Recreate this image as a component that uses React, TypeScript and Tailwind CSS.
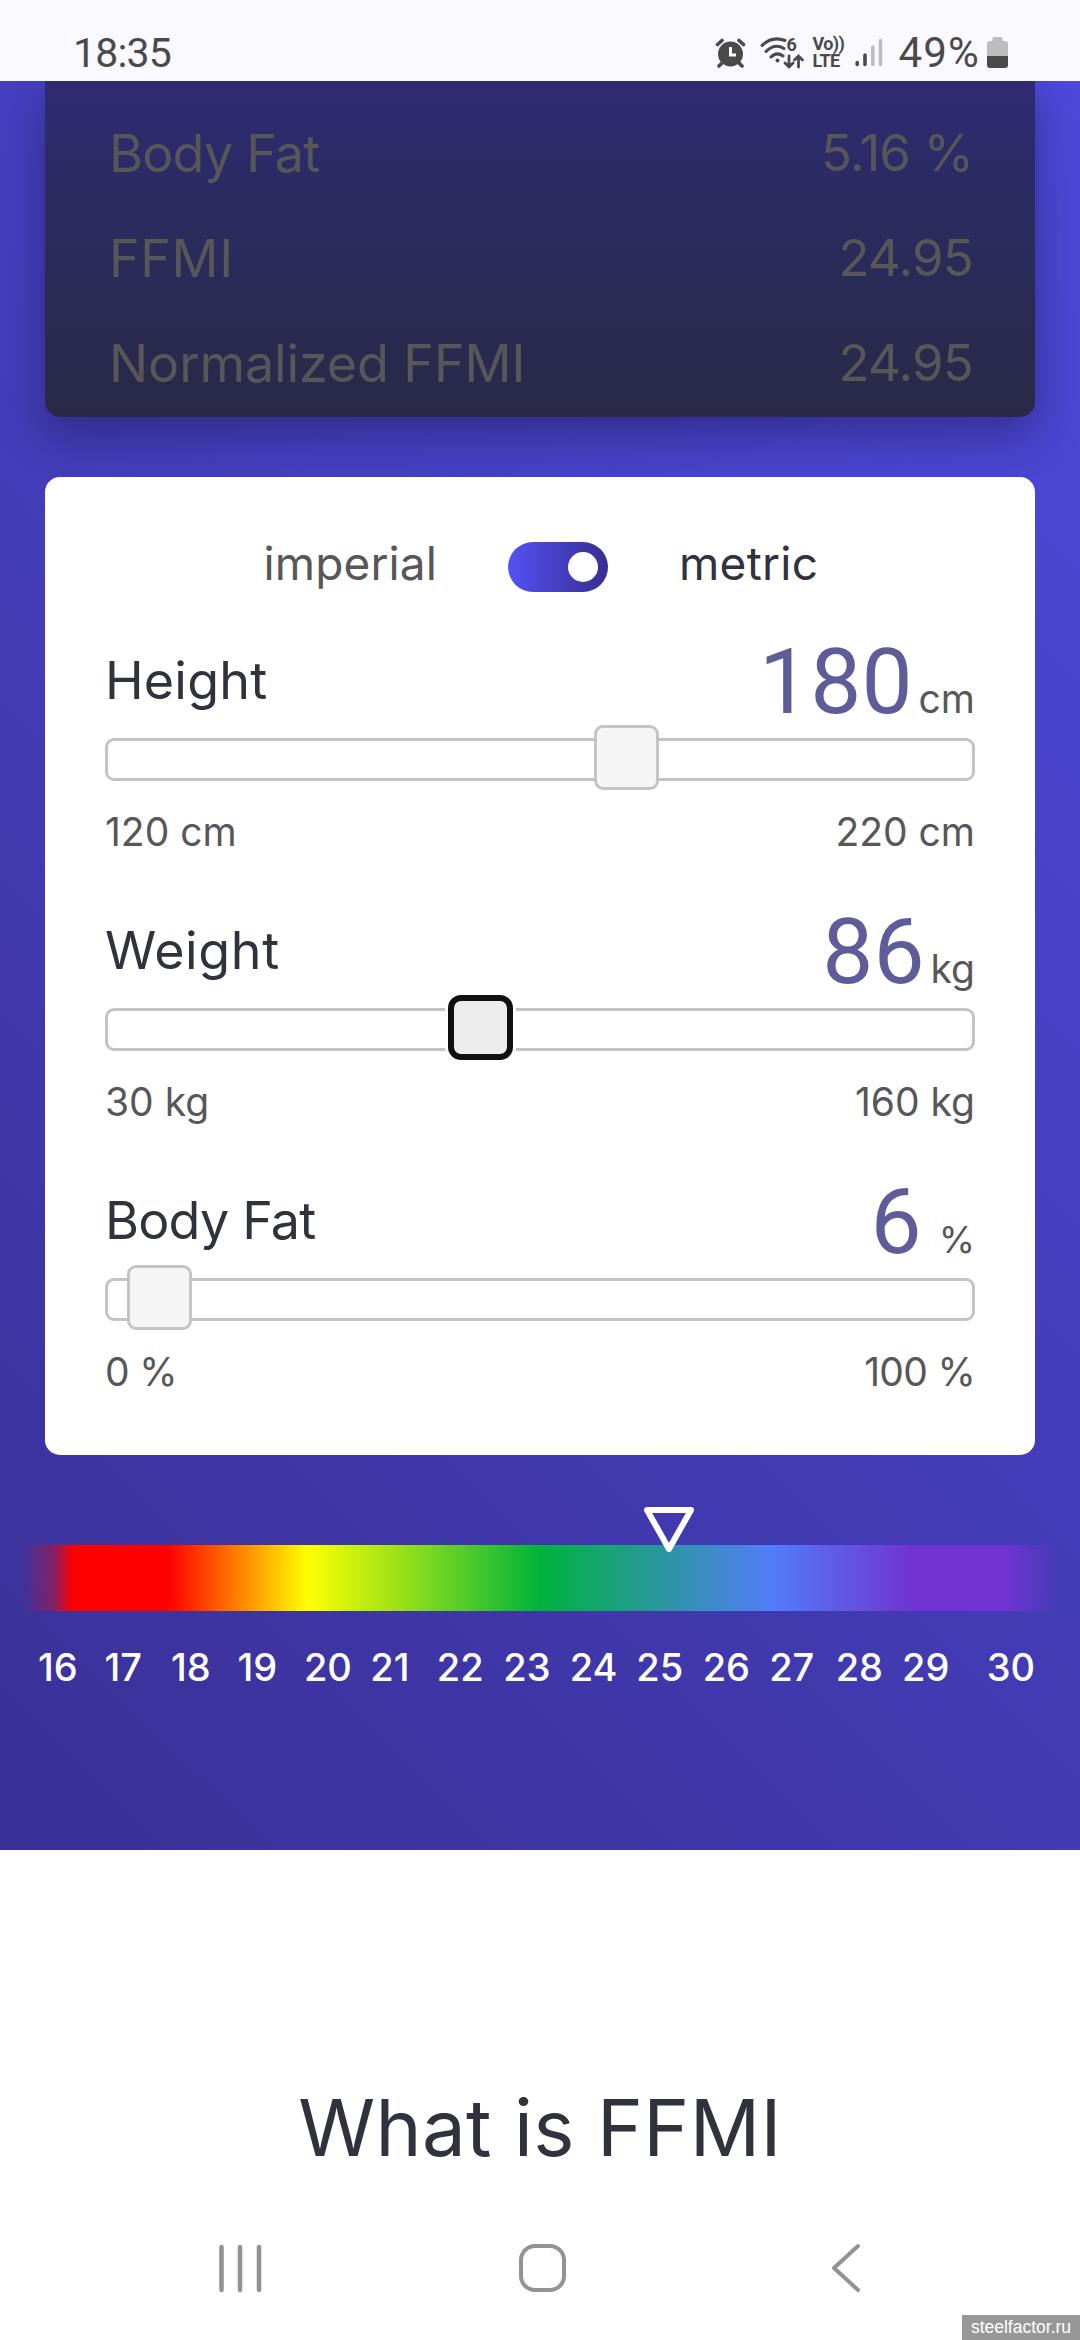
import { useState } from 'react';
import clsx from 'clsx';

type Result = { label: string; value: string; tracking: string };

type Field = {
  label: string;
  unit: string;
  value: number;
  min: number;
  max: number;
  thumb: number;
  tracking: string;
  focused?: boolean;
};

const RESULTS: Result[] = [
  { label: 'Body Fat', value: '5.16 %', tracking: 'tracking-[-0.8px]' },
  { label: 'FFMI', value: '24.95', tracking: 'tracking-[0.6px]' },
  { label: 'Normalized FFMI', value: '24.95', tracking: 'tracking-[-0.1px]' },
];

// thumb: left offset of the handle along the track
const FIELDS: Field[] = [
  { label: 'Height', unit: 'cm', value: 180, min: 120, max: 220, thumb: 486, tracking: 'tracking-[0.2px]' },
  { label: 'Weight', unit: 'kg', value: 86, min: 30, max: 160, thumb: 340, tracking: 'tracking-[0.6px]', focused: true },
  { label: 'Body Fat', unit: '%', value: 6, min: 0, max: 100, thumb: 19, tracking: 'tracking-[-0.8px]' },
];

const SCALE = [16, 17, 18, 19, 20, 21, 22, 23, 24, 25, 26, 27, 28, 29, 30];

function StatusBar() {
  return (
    <header className="flex h-[81px] shrink-0 items-start justify-between bg-[#faf9ff] pt-[29px] pr-[72px] pl-[73px] font-[Roboto,sans-serif] text-[#4a4a4a]">
      <span className="text-[41px] leading-[48px] tracking-[-0.8px]">18:35</span>
      <div className="flex items-start">
        <svg className="mt-[9px] h-[30px] w-[31px]" viewBox="0 0 31 30" fill="none">
          <circle cx="15.5" cy="16" r="12.5" fill="#4a4a4a" />
          <path d="M2.5 6.5 7 2.5M28.5 6.5 24 2.5M7 25l-3 3M24 25l3 3" stroke="#4a4a4a" strokeWidth="3.6" strokeLinecap="round" />
          <path d="M15.5 9v8h5.5" stroke="#faf9ff" strokeWidth="3" />
        </svg>
        <div className="relative mt-[7px] ml-[14px] h-[34px] w-[44px]">
          <svg className="h-[34px] w-[44px]" viewBox="0 0 44 34" fill="none" stroke="#4a4a4a" strokeLinecap="round">
            <path d="M2 9.5C9 2.5 17 1.5 25 4.5M6 15.5C12 9.5 18 9 24 12.5M11 21C15 17 19 17 23 20" strokeWidth="3" />
            <circle cx="17.5" cy="24.5" r="2" fill="#4a4a4a" stroke="none" />
            <path d="M29 20v11m-4-4 4 4 4-4M38.5 31V20m-4 4 4-4 4 4" strokeWidth="2.8" />
          </svg>
          <span className="absolute top-0 left-[26px] text-[18px] leading-[18px] font-bold">6</span>
        </div>
        <div className="mt-[7px] ml-[8px] flex w-[34px] flex-col text-[18px] leading-[16px] font-bold">
          <span className="tracking-[-0.6px] whitespace-nowrap">Vo))</span>
          <span className="leading-[18px] tracking-[-0.6px]">LTE</span>
        </div>
        <svg className="mt-[9px] ml-[9px] h-[30px] w-[28px]" viewBox="0 0 28 30" strokeWidth="3.6" strokeLinecap="round">
          <path d="M2.2 24.5v2M10 17v9.5" stroke="#4a4a4a" />
          <path d="M17.8 9v17.5M25.5 2.5v24" stroke="#bdbdc0" />
        </svg>
        <span className="ml-[15px] text-[42px] leading-[48px] tracking-[1.2px]">49%</span>
        <svg className="mt-[8px] ml-[7px] h-[32px] w-[21px]" viewBox="0 0 21 32">
          <path d="M7 0h7q1.5 0 1.5 1.5V4H18q3 0 3 3v12H0V7q0-3 3-3h2.5V1.5Q5.5 0 7 0Z" fill="#bdbdc0" />
          <path d="M0 19h21v9q0 3-3 3H3q-3 0-3-3Z" fill="#4a4a4a" />
        </svg>
      </div>
    </header>
  );
}

function ResultCard() {
  return (
    <div className="mx-[45px] h-[336px] rounded-b-[15px] bg-linear-to-b from-[#2e2b72] to-[#292946] pt-[20px] pr-[62px] pl-[64px] shadow-[0_15px_45px_rgba(20,18,60,0.45)]">
      {RESULTS.map((row) => (
        <div key={row.label} className="flex h-[105px] items-center justify-between text-[52px] text-[#57575a]">
          <span className={row.tracking}>{row.label}</span>
          <span className="text-[51px] tracking-[-0.8px]">{row.value}</span>
        </div>
      ))}
    </div>
  );
}

function Slider({ field }: { field: Field }) {
  return (
    <div className="relative h-[43px] rounded-[9px] border-[3px] border-[#c4c4c4] bg-white">
      <div
        className={clsx(
          'absolute -top-[16px] size-[65px]',
          field.focused
            ? 'rounded-[13px] border-[6px] border-[#101010] bg-[#ececec] shadow-[0_0_0_3px_#fff]'
            : 'rounded-[9px] border-[3px] border-[#c4c4c4] bg-[#f5f5f5]',
        )}
        style={{ left: field.thumb }}
      />
    </div>
  );
}

function FieldRow({ field }: { field: Field }) {
  const percent = field.unit === '%';

  return (
    <div className="h-[270px]">
      <div className="flex h-[111px] items-start justify-between">
        <span className={clsx('text-[52px] leading-[108px] text-[#30323d]', field.tracking)}>{field.label}</span>
        <div className="mt-[25px] flex items-baseline leading-[60px]">
          <span className="font-[Roboto,sans-serif] text-[91px] text-[#5f5d99]">{field.value}</span>
          <span className={clsx('text-[#57575a]', percent ? 'ml-[17px] text-[37px]' : 'ml-[6px] text-[39px]')}>
            {field.unit}
          </span>
        </div>
      </div>
      <Slider field={field} />
      <div
        className={clsx(
          'mt-[21px] flex justify-between text-[39px] leading-[60px] text-[#57575a]',
          percent && 'tracking-[-0.7px]',
        )}
      >
        <span>{`${field.min} ${field.unit}`}</span>
        <span>{`${field.max} ${field.unit}`}</span>
      </div>
    </div>
  );
}

function Calculator() {
  const [metric, setMetric] = useState(true);

  return (
    <div className="mx-[45px] mt-[60px] h-[978px] rounded-[15px] bg-white px-[60px] pt-[65px]">
      <div className="flex h-[50px] items-center justify-center gap-[71px] pl-[2px] text-[46px] leading-[50px]">
        <span className={clsx('pb-[8px] tracking-[0.1px]', metric ? 'text-[#57575a]' : 'text-[#30323d]')}>imperial</span>
        <button
          className={clsx(
            'flex h-[50px] w-[100px] items-center rounded-full bg-linear-to-r from-[#5451f6] to-[#372e92] px-[10px]',
            metric ? 'justify-end' : 'justify-start',
          )}
          onClick={() => setMetric(!metric)}
        >
          <span className="size-[30px] rounded-full bg-white" />
        </button>
        <span className={clsx('pb-[8px] tracking-[0.3px]', metric ? 'text-[#30323d]' : 'text-[#57575a]')}>metric</span>
      </div>
      <div className="mt-[35px]">
        {FIELDS.map((field) => (
          <FieldRow key={field.label} field={field} />
        ))}
      </div>
    </div>
  );
}

function ColorScale() {
  return (
    <div className="mt-[90px]">
      <div className="relative h-[66px] bg-[linear-gradient(90deg,#ff000000_22px,#ff000060_54px,#ff0000_73px,#ff0000_168px,#ffff00_307px,#00b33c_540px,#527dfa_772px,#7033d1_912px,#7033d1_1008px,#7033d100_1058px)]">
        <svg className="absolute -top-[38px] left-[644px] h-[46px] w-[50px]" viewBox="0 0 50 46">
          <path d="M3 3h44L25 42Z" fill="none" stroke="#fff" strokeWidth="6" strokeLinejoin="round" />
        </svg>
      </div>
      <div className="mt-[26px] flex pr-[45px] pl-[38px] text-[38px] leading-[60px] font-medium text-white">
        {SCALE.map((n) => (
          <span key={n} className="w-[66.5px] last:grow last:text-right">
            {n}
          </span>
        ))}
      </div>
    </div>
  );
}

function NavBar() {
  return (
    <div className="mt-[65px] flex h-[50px] pl-[217px]">
      <svg className="h-[50px] w-[46px]" viewBox="0 0 46 50" stroke="#939393" strokeWidth="4.5" strokeLinecap="round">
        <path d="M4.5 4v43M23 4v43M42 4v43" />
      </svg>
      <svg className="ml-[254px] h-[50px] w-[50px]" viewBox="0 0 50 50" fill="none" stroke="#939393" strokeWidth="4">
        <rect x="4" y="3" width="43" height="44" rx="14" />
      </svg>
      <svg className="ml-[263px] h-[50px] w-[32px]" viewBox="0 0 32 50" fill="none" stroke="#939393" strokeWidth="4" strokeLinecap="round" strokeLinejoin="round">
        <path d="M28 3 4 25l24 22" />
      </svg>
    </div>
  );
}

export default function App() {
  return (
    <div className="relative flex h-[2340px] w-[1080px] flex-col overflow-hidden bg-white font-[Inter,sans-serif]">
      <StatusBar />
      <section className="h-[1769px] shrink-0 overflow-hidden bg-[linear-gradient(45deg,#3a3096,#4d4adc)]">
        <ResultCard />
        <Calculator />
        <ColorScale />
      </section>
      <h1 className="mt-[228px] text-center text-[78px] leading-[100px] tracking-[0.3px] text-[#30323d]">What is FFMI</h1>
      <NavBar />
      <div className="absolute right-0 bottom-0 h-[25px] w-[118px] bg-[#979797] text-center font-['Liberation_Sans',Arial,sans-serif] text-[17.5px] leading-[25px] text-white">
        steelfactor.ru
      </div>
    </div>
  );
}
